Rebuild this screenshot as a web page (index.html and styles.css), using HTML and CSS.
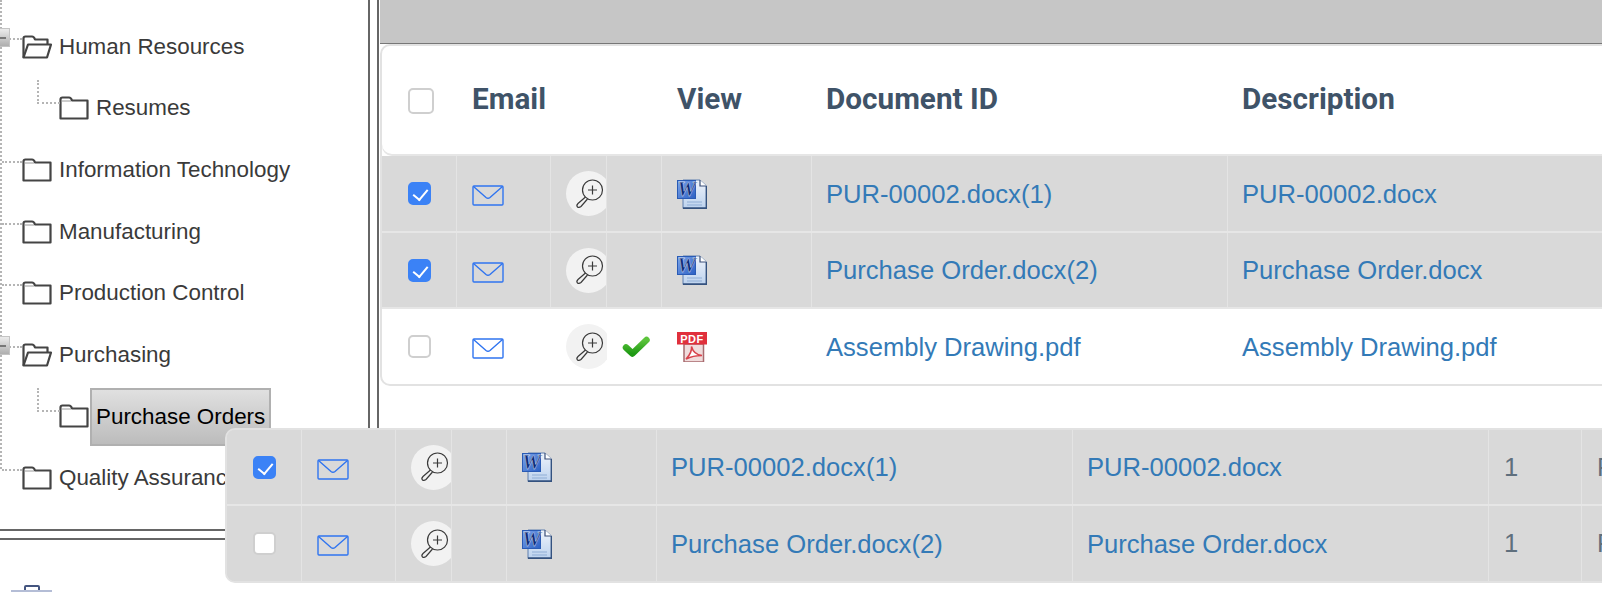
FILE: index.html
```html
<!DOCTYPE html>
<html lang="en">

<head>
    <meta charset="UTF-8">
    <title>Documents</title>
    <link rel="stylesheet" href="styles.css">
</head>
<body>
    <svg class="defs" width="0" height="0">
        <defs>
            <linearGradient id="wordBox" x1="0" y1="0" x2="1" y2="1">
                <stop offset="0" stop-color="#7ea6ea"/>
                <stop offset="1" stop-color="#2a5fc4"/>
            </linearGradient>
            <linearGradient id="wordPage" x1="0" y1="0" x2="0" y2="1">
                <stop offset="0" stop-color="#eef3fb"/>
                <stop offset="1" stop-color="#bcd2ee"/>
            </linearGradient>
            <linearGradient id="tickFill" x1="0" y1="0" x2="0" y2="1">
                <stop offset="0" stop-color="#5cc43c"/>
                <stop offset="1" stop-color="#1f9a14"/>
            </linearGradient>
            <symbol id="folder" viewBox="0 0 30 24">
                <path d="M1.500 22.500V3.500Q1.500 1.500 3.500 1.500H10Q12 1.500 13 4.500H28.500V22.500Z" fill="#fff" stroke="#444" stroke-width="2.200" stroke-linejoin="round"/>
                <path d="M2.500 5H12" stroke="#9a9a9a" stroke-width="1" fill="none"/>
            </symbol>
            <symbol id="folder-open" viewBox="0 0 30 24">
                <path d="M1.500 22.500V3.500Q1.500 1.500 3.500 1.500H10Q12 1.500 13 4.500H25.500V9" fill="#fff" stroke="#444" stroke-width="2.200" stroke-linejoin="round"/>
                <path d="M1.500 22.500L6 9.500H29L25 22.500Z" fill="#fff" stroke="#444" stroke-width="2.200" stroke-linejoin="round"/>
            </symbol>
            <symbol id="mail" viewBox="0 0 32 21">
                <rect x="1" y="1" width="30" height="19" rx="1" fill="none" stroke="#2f74f0" stroke-width="1.400"/>
                <path d="M1.500 1.500L14 12.500Q16 14 18 12.500L30.500 1.500" fill="none" stroke="#2f74f0" stroke-width="1.400"/>
            </symbol>
            <symbol id="zoom" viewBox="0 0 30 30">
                <circle cx="18.500" cy="11" r="10" fill="none" stroke="#3a3a3a" stroke-width="1.200"/>
                <path d="M18.500 6.500V15.500M14 11H23" stroke="#3a3a3a" stroke-width="1.200"/>
                <path d="M11.500 18L4 24.500Q2 26.500 3.500 28Q5 29 7 27.500L13.500 20" fill="none" stroke="#3a3a3a" stroke-width="1.200"/>
            </symbol>
            <symbol id="word" viewBox="0 0 30 30">
                <path d="M6 1H23L29.500 7V29.500H6Z" fill="url(#wordPage)" stroke="#5f7fae" stroke-width="1"/>
                <path d="M23 1V7H29.500" fill="#fff" stroke="#3a4f78" stroke-width="1.200"/>
                <path d="M6 29.200H29.500V7" fill="none" stroke="#34527f" stroke-width="1.800"/>
                <path d="M10 23H25M10 26H25" stroke="#8fadd6" stroke-width="1.200"/>
                <rect x="0.500" y="1.500" width="18" height="18" fill="url(#wordBox)" stroke="#2a5bb5"/>
                <text x="9.500" y="17" class="word-letter">W</text>
            </symbol>
            <symbol id="pdf" viewBox="0 0 30 30">
                <rect x="7" y="12" width="19.500" height="18" fill="#f0dcdc" stroke="#a86a6e" stroke-width="1.500"/>
                <path d="M9 27C13 23 15 19 14.500 14.500C16 20 20 23 25 23.500C20 23.500 14 24.500 9 27Z" fill="#fff" stroke="#d8434c" stroke-width="1.500"/>
                <rect x="0" y="0" width="30" height="12.500" fill="#e0303c"/>
                <text x="15" y="10.500" class="pdf-label">PDF</text>
            </symbol>
            <symbol id="tick" viewBox="0 0 28 22">
                <path d="M4 11.500L10.500 17.500L24.500 4" fill="none" stroke="url(#tickFill)" stroke-width="6.500" stroke-linecap="round" stroke-linejoin="round"/>
            </symbol>
        </defs>
    </svg>

    <div class="frames">
        <div class="sidebar">
            <div class="tree-pane">
                <ul class="tree">
                    <li class="node">
                        <span class="expander"></span>
                        <svg class="folder"><use href="#folder-open"/></svg>
                        <span class="label">Human Resources</span>
                    </li>
                    <li class="node child">
                        <svg class="folder"><use href="#folder"/></svg>
                        <span class="label">Resumes</span>
                    </li>
                    <li class="node">
                        <svg class="folder"><use href="#folder"/></svg>
                        <span class="label">Information Technology</span>
                    </li>
                    <li class="node">
                        <svg class="folder"><use href="#folder"/></svg>
                        <span class="label">Manufacturing</span>
                    </li>
                    <li class="node">
                        <svg class="folder"><use href="#folder"/></svg>
                        <span class="label">Production Control</span>
                    </li>
                    <li class="node">
                        <span class="expander"></span>
                        <svg class="folder"><use href="#folder-open"/></svg>
                        <span class="label">Purchasing</span>
                    </li>
                    <li class="node child">
                        <svg class="folder"><use href="#folder"/></svg>
                        <span class="label selected">Purchase Orders</span>
                    </li>
                    <li class="node">
                        <svg class="folder"><use href="#folder"/></svg>
                        <span class="label">Quality Assurance</span>
                    </li>
                </ul>
            </div>
            <div class="tree-foot"></div>
        </div>

        <div class="main">
            <div class="toolbar"></div>
            <div class="card">
                <div class="row head">
                    <div class="cell check"><span class="box"></span></div>
                    <div class="cell title">Email</div>
                    <div class="cell"></div>
                    <div class="cell"></div>
                    <div class="cell title">View</div>
                    <div class="cell title name">Document ID</div>
                    <div class="cell title name">Description</div>
                </div>
                <div class="row marked">
                    <div class="cell check"><span class="box on"></span></div>
                    <div class="cell"><svg class="mail"><use href="#mail"/></svg></div>
                    <div class="cell tool"><span class="lens"><svg><use href="#zoom"/></svg></span></div>
                    <div class="cell"></div>
                    <div class="cell"><svg class="doc"><use href="#word"/></svg></div>
                    <div class="cell name"><a href="#">PUR-00002.docx(1)</a></div>
                    <div class="cell name"><a href="#">PUR-00002.docx</a></div>
                </div>
                <div class="row marked second">
                    <div class="cell check"><span class="box on"></span></div>
                    <div class="cell"><svg class="mail"><use href="#mail"/></svg></div>
                    <div class="cell tool"><span class="lens"><svg><use href="#zoom"/></svg></span></div>
                    <div class="cell"></div>
                    <div class="cell"><svg class="doc"><use href="#word"/></svg></div>
                    <div class="cell name"><a href="#">Purchase Order.docx(2)</a></div>
                    <div class="cell name"><a href="#">Purchase Order.docx</a></div>
                </div>
                <div class="row last">
                    <div class="cell check"><span class="box"></span></div>
                    <div class="cell"><svg class="mail"><use href="#mail"/></svg></div>
                    <div class="cell tool"><span class="lens"><svg><use href="#zoom"/></svg></span></div>
                    <div class="cell"><svg class="tick"><use href="#tick"/></svg></div>
                    <div class="cell"><svg class="doc"><use href="#pdf"/></svg></div>
                    <div class="cell name"><a href="#">Assembly Drawing.pdf</a></div>
                    <div class="cell name"><a href="#">Assembly Drawing.pdf</a></div>
                </div>
            </div>
        </div>
    </div>

    <div class="footer">
        <svg class="case" viewBox="0 0 41 20">
            <path d="M14 5V2Q14 1 15 1H27Q28 1 28 2V5" fill="none" stroke="#44557f" stroke-width="2"/>
            <rect x="0" y="5" width="41" height="15" fill="#b4bdd6"/>
        </svg>
    </div>

    <!-- rows being dragged, floats over the tree and the list -->
    <div class="card ghost">
        <div class="row marked wide">
            <div class="cell check"><span class="box on"></span></div>
            <div class="cell"><svg class="mail"><use href="#mail"/></svg></div>
            <div class="cell tool"><span class="lens"><svg><use href="#zoom"/></svg></span></div>
            <div class="cell"></div>
            <div class="cell"><svg class="doc"><use href="#word"/></svg></div>
            <div class="cell name"><a href="#">PUR-00002.docx(1)</a></div>
            <div class="cell name"><a href="#">PUR-00002.docx</a></div>
            <div class="cell plain">1</div>
            <div class="cell plain">Purchasing</div>
        </div>
        <div class="row marked wide">
            <div class="cell check"><span class="box"></span></div>
            <div class="cell"><svg class="mail"><use href="#mail"/></svg></div>
            <div class="cell tool"><span class="lens"><svg><use href="#zoom"/></svg></span></div>
            <div class="cell"></div>
            <div class="cell"><svg class="doc"><use href="#word"/></svg></div>
            <div class="cell name"><a href="#">Purchase Order.docx(2)</a></div>
            <div class="cell name"><a href="#">Purchase Order.docx</a></div>
            <div class="cell plain">1</div>
            <div class="cell plain">Purchasing</div>
        </div>
    </div>
</body>
</html>
```

FILE: styles.css
```css
* { box-sizing: border-box; }
html, body {
    height: 100%;
}
body {
    margin: 0;
    width: 1602px;
    height: 592px;
    overflow: hidden;
    position: relative;
    background: #fff;
    font-family: 'Liberation Sans', Arial, sans-serif;
}
.defs {
    position: absolute;
}

.frames {
    display: flex;
    height: 540px;
}

/* left tree */
.sidebar {
    width: 370px;
    flex-shrink: 0;
    border-right: 2px solid #666;
}
.tree-pane {
    height: 531px;
    border-bottom: 2px solid #666;
}
.tree-foot {
    height: 9px;
    border-bottom: 2px solid #666;
}
.tree {
    list-style: none;
    margin: 0;
    padding: 16px 0 0;
    height: 469px;
    border-left: 2px dotted #b5b5b5;
}
.node {
    position: relative;
    display: flex;
    align-items: center;
    height: 61.6px;
    padding-left: 20px;
    font-size: 22.4px;
    color: #3a3a3a;
}
.node::before {
    content: '';
    position: absolute;
    left: 0;
    top: 22px;
    width: 20px;
    border-top: 2px dotted #b5b5b5;
}
.child {
    padding-left: 57px;
}
.child::before {
    left: 35px;
    top: 2px;
    width: 21px;
    height: 22px;
    border-top: none;
    border-left: 2px dotted #b5b5b5;
    border-bottom: 2px dotted #b5b5b5;
}
.expander {
    position: absolute;
    left: -13px;
    top: 12px;
    width: 21px;
    height: 19px;
    background: linear-gradient(#ececec, #aeaeae);
    border: 1px solid #c4c4c4;
}
.expander::after {
    content: '';
    position: absolute;
    left: 10px;
    top: 8px;
    width: 6px;
    height: 2px;
    background: #777;
}
.folder {
    width: 30px;
    height: 24px;
    flex-shrink: 0;
}
.label {
    margin-left: 1px;
    padding: 0 5px;
    border: 1px solid transparent;
    white-space: nowrap;
}
.selected {
    display: flex;
    align-items: center;
    height: 58px;
    margin-top: 2px;
    border: 2px solid #b0b0b0;
    padding: 0 4px;
    background: linear-gradient(#e0e0e0, #bcbcbc);
    color: #000;
}

/* document list */
.main {
    flex: 1;
    min-width: 0;
    margin-left: 7px;
    border-left: 2px solid #666;
}
.toolbar {
    height: 44px;
    margin-left: 1px;
    background: #c6c6c6;
    border-bottom: 1px solid #777;
}
.card {
    margin-left: 1px;
    width: 1268px;
    background: #fff;
    border: 2px solid #e2e2e2;
    border-radius: 10px;
    overflow: hidden;
}
.row {
    display: grid;
    grid-template-columns: 75px 94px 56px 55px 150px 416px 416px;
    height: 77px;
    font-size: 25.6px;
    border-bottom: 2px solid #e6e6e6;
}
.head {
    height: 110px;
    border-bottom: none;
    border-radius: 10px;
    box-shadow: inset 0 -2px 0 #e6e6e6;
    font-family: Roboto, sans-serif;
    font-weight: 700;
    font-size: 29.7px;
    color: #3f5368;
}
.head .cell {
    border-right: none;
}
.head .title {
    padding-bottom: 5px;
}
.marked {
    background: #d9d9d9;
}
.second {
    height: 76px;
}
.last {
    height: 75px;
    border-bottom: none;
}
.last .cell {
    border-right: none;
}
.cell {
    display: flex;
    align-items: center;
    padding-left: 15px;
    overflow: hidden;
    white-space: nowrap;
    border-right: 1px solid #e4e4e4;
}
.check {
    padding-left: 26px;
}
.name {
    padding-left: 14px;
}
.tool {
    overflow: hidden;
}
.plain {
    color: #5f6f7d;
}
a {
    margin-top: 1px;
    color: #337ab7;
    text-decoration: none;
}
.box {
    display: block;
    position: relative;
    width: 23px;
    height: 23px;
    background: #fff;
    border: 2px solid #cfcfcf;
    border-radius: 5px;
}
.head .box {
    width: 26px;
    height: 26px;
}
.box.on {
    background: #3b82f6;
    border-color: #3b82f6;
}
.box.on::after {
    content: '';
    position: absolute;
    left: 6px;
    top: 2px;
    width: 7px;
    height: 12px;
    border: solid #fff;
    border-width: 0 2.500px 2.500px 0;
    transform: rotate(40deg);
}
.mail {
    width: 32px;
    height: 21px;
    margin-top: 4px;
}
.lens {
    display: flex;
    align-items: center;
    justify-content: center;
    width: 45px;
    height: 45px;
    flex-shrink: 0;
    border-radius: 50%;
    background: #f2f2f2;
}
.lens svg {
    width: 30px;
    height: 30px;
}
.tick {
    width: 28px;
    height: 22px;
    flex-shrink: 0;
}
.doc {
    width: 30px;
    height: 30px;
}
.word-letter {
    font-family: 'Liberation Serif', serif;
    font-weight: 700;
    font-style: italic;
    font-size: 21px;
    text-anchor: middle;
    fill: #0d2a78;
    stroke: #fff;
    stroke-width: 0.300px;
}
.pdf-label {
    font-family: 'Liberation Sans', sans-serif;
    font-weight: 700;
    font-size: 11px;
    letter-spacing: 0.500px;
    text-anchor: middle;
    fill: #fff;
}

.footer {
    padding: 45px 0 0 11px;
}
.case {
    display: block;
    width: 41px;
    height: 20px;
}

/* dragged rows */
.ghost {
    position: absolute;
    left: 225px;
    top: 428px;
    width: 1500px;
    margin: 0;
    background: #d9d9d9;
}
.wide {
    grid-template-columns: 75px 94px 56px 55px 150px 416px 416px 93px 200px;
    height: 76px;
}
.wide:last-child {
    height: 75px;
    border-bottom: none;
}
```
